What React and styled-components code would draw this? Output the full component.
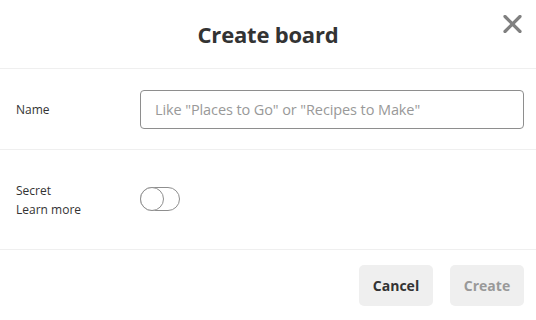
import React, { useState } from "react";
import styled, { createGlobalStyle } from "styled-components";

const GlobalStyle = createGlobalStyle`
  * { box-sizing: border-box; }
  body {
    margin: 0;
    background: #fff;
    font-family: "Open Sans", "Noto Sans", "Liberation Sans", sans-serif;
    color: #333;
  }
`;

const Modal = styled.div`
  width: 536px;
  height: 320px;
  background: #fff;
  display: flex;
  flex-direction: column;
`;

const Header = styled.div`
  height: 69px;
  display: grid;
  grid-template-columns: 1fr auto 1fr;
  align-items: center;
  border-bottom: 1px solid #efefef;
`;

const Title = styled.h1`
  grid-column: 2;
  margin: 0;
  font-size: 22px;
  font-weight: 700;
  color: #333;
  letter-spacing: -0.2px;
`;

const CloseButton = styled.button`
  grid-column: 3;
  justify-self: end;
  align-self: start;
  margin: 15px 14px 0 0;
  width: 19px;
  height: 18px;
  padding: 0;
  border: none;
  background: transparent;
  cursor: pointer;
  display: flex;
`;

const Row = styled.div`
  display: flex;
  align-items: ${(p) => (p.$top ? "flex-start" : "center")};
  height: ${(p) => p.$height}px;
  padding: ${(p) => (p.$top ? "31px 12px 0 16px" : "0 12px 0 16px")};
  border-bottom: 1px solid #efefef;
`;

const Label = styled.div`
  width: 124px;
  flex-shrink: 0;
  font-size: 12px;
  line-height: 19px;
  color: #333;
`;

const Input = styled.input`
  flex: 1;
  height: 39px;
  border: 1px solid #8e8e8e;
  border-radius: 4px;
  padding: 0 14px;
  font-family: inherit;
  font-size: 14.5px;
  color: #333;
  outline: none;

  &::placeholder {
    color: #999;
    letter-spacing: -0.1px;
  }
`;

const Toggle = styled.button`
  width: 40px;
  height: 24px;
  margin-top: 6px;
  padding: 0;
  border: 1px solid #8e8e8e;
  border-radius: 12px;
  background: ${(p) => (p.$on ? "#333" : "#fff")};
  display: flex;
  justify-content: ${(p) => (p.$on ? "flex-end" : "flex-start")};
  cursor: pointer;
`;

const Knob = styled.span`
  width: 24px;
  height: 24px;
  margin: -1px;
  border: 1px solid #8e8e8e;
  border-radius: 50%;
  background: #fff;
`;

const Footer = styled.div`
  flex: 1;
  display: flex;
  justify-content: flex-end;
  align-items: flex-start;
  gap: 17px;
  padding: 15px 12px 0 0;
`;

const Button = styled.button`
  width: 74px;
  height: 41px;
  border: none;
  border-radius: 5px;
  background: #efefef;
  font-family: inherit;
  font-size: 14px;
  font-weight: 700;
  color: ${(p) => (p.disabled ? "#999" : "#333")};
  cursor: ${(p) => (p.disabled ? "default" : "pointer")};
`;

export default function App() {
  const [name, setName] = useState("");
  const [secret, setSecret] = useState(false);

  return (
    <>
      <GlobalStyle />
      <Modal>
        <Header>
          <Title>Create board</Title>
          <CloseButton aria-label="Close">
            <svg width="19" height="18" viewBox="0 0 19 18">
              <path
                d="M2 1.5 L17 16.5 M17 1.5 L2 16.5"
                stroke="#808080"
                strokeWidth="3.2"
                strokeLinecap="round"
              />
            </svg>
          </CloseButton>
        </Header>

        <Row $height={81}>
          <Label>Name</Label>
          <Input
            value={name}
            onChange={(e) => setName(e.target.value)}
            placeholder={'Like "Places to Go" or "Recipes to Make"'}
          />
        </Row>

        <Row $top $height={100}>
          <Label>
            Secret
            <br />
            Learn more
          </Label>
          <Toggle $on={secret} onClick={() => setSecret(!secret)}>
            <Knob />
          </Toggle>
        </Row>

        <Footer>
          <Button>Cancel</Button>
          <Button disabled={!name}>Create</Button>
        </Footer>
      </Modal>
    </>
  );
}
